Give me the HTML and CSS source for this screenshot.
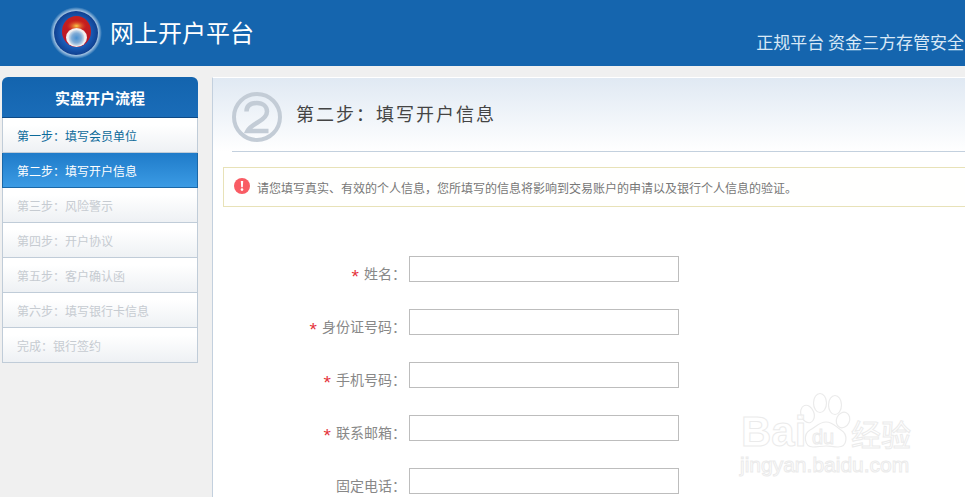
FILE: index.html
```html
<!DOCTYPE html>
<html lang="zh-CN">
<head>
<meta charset="utf-8">
<title>网上开户平台</title>
<link rel="stylesheet" href="styles.css">
</head>
<body>
<header class="top">
  <svg class="logo" width="54" height="54" viewBox="0 0 54 54">
    <defs>
      <radialGradient id="glow"><stop offset="0.82" stop-color="#c4d9ee"/><stop offset="1" stop-color="#1565ae"/></radialGradient>
      <radialGradient id="disc"><stop offset="0.6" stop-color="#1c62c0"/><stop offset="1" stop-color="#10408f"/></radialGradient>
      <linearGradient id="red" x1="0" y1="0" x2="0" y2="1"><stop offset="0" stop-color="#c8201c"/><stop offset="1" stop-color="#b8142a"/></linearGradient>
      <radialGradient id="sun"><stop offset="0" stop-color="#fbd34a"/><stop offset="1" stop-color="#e8401c" stop-opacity="0"/></radialGradient>
      <radialGradient id="core"><stop offset="0" stop-color="#4a90d0"/><stop offset="0.6" stop-color="#7fabd6"/><stop offset="1" stop-color="#d5e0ea"/></radialGradient>
    </defs>
    <circle cx="27" cy="27" r="26" fill="url(#glow)"/>
    <circle cx="27" cy="27" r="22" fill="url(#disc)"/>
    <ellipse cx="27.500" cy="25.500" rx="14.500" ry="15.500" fill="url(#red)"/>
    <ellipse cx="27.500" cy="20" rx="10" ry="6" fill="url(#sun)"/>
    <ellipse cx="27.500" cy="31.500" rx="10.500" ry="9.500" fill="#f4eeee"/>
    <ellipse cx="27.500" cy="32" rx="8" ry="8" fill="url(#core)"/>
  </svg>
  <div class="brand">网上开户平台</div>
  <div class="slogan">正规平台 资金三方存管安全</div>
</header>

<div class="page">
  <aside class="side">
    <h2 class="side-title">实盘开户流程</h2>
    <ul class="steps">
      <li class="step step-done">第一步：填写会员单位</li>
      <li class="step step-active">第二步：填写开户信息</li>
      <li class="step">第三步：风险警示</li>
      <li class="step">第四步：开户协议</li>
      <li class="step">第五步：客户确认函</li>
      <li class="step">第六步：填写银行卡信息</li>
      <li class="step">完成：银行签约</li>
    </ul>
  </aside>

  <main class="main">
    <div class="head">
      <svg class="num" width="50" height="50" viewBox="0 0 50 50">
        <circle cx="25" cy="25" r="23" fill="none" stroke="#c3ccd6" stroke-width="4"/>
        <path d="M14.500 19.500C14.500 13 19.500 11 25 11C31 11 35 14.500 35 19.500C35 24.500 31 27.500 25.500 30.500C20.500 33.500 17 36 15.500 39L36.500 39" fill="none" stroke="#c3ccd6" stroke-width="4.500"/>
      </svg>
      <h1 class="head-title">第二步：填写开户信息</h1>
    </div>

    <div class="notice">
      <svg class="notice-icon" width="16" height="16" viewBox="0 0 16 16">
        <circle cx="8" cy="8" r="8" fill="#f95c64"/>
        <path d="M6.800 3h2.400l-.4 6.200H7.200z" fill="#fff"/>
        <circle cx="8" cy="11.600" r="1.300" fill="#fff"/>
      </svg>
      <span>请您填写真实、有效的个人信息，您所填写的信息将影响到交易账户的申请以及银行个人信息的验证。</span>
    </div>

    <form class="form">
      <div class="row"><label class="label"><span class="req">*</span>姓名：</label><input class="field" type="text"></div>
      <div class="row"><label class="label"><span class="req">*</span>身份证号码：</label><input class="field" type="text"></div>
      <div class="row"><label class="label"><span class="req">*</span>手机号码：</label><input class="field" type="text"></div>
      <div class="row"><label class="label"><span class="req">*</span>联系邮箱：</label><input class="field" type="text"></div>
      <div class="row"><label class="label">固定电话：</label><input class="field" type="text"></div>
    </form>
  </main>
</div>

<div class="mark">
  <svg class="paw" width="52" height="58" viewBox="0 0 52 58">
    <g fill="none" stroke="#ebebeb" stroke-width="1.200">
      <ellipse cx="7.500" cy="22" rx="6.500" ry="9" transform="rotate(-20 7.500 22)"/>
      <ellipse cx="20" cy="11" rx="6.500" ry="9.500"/>
      <ellipse cx="35" cy="13" rx="6.500" ry="9.500"/>
      <ellipse cx="43" cy="28" rx="6.500" ry="8" transform="rotate(25 43 28)"/>
      <path d="M26 30C33 30 36 35 41 38C48 42 48 55 38 55C33 55 30 54 26 54C21 54 18 55 13 55C4 55 3 42 10 38C16 35 19 30 26 30Z"/>
    </g>
  </svg>
  <span class="mark-bai">Bai</span>
  <span class="mark-du">du</span>
  <span class="mark-cn">经验</span>
  <span class="mark-url">jingyan.baidu.com</span>
</div>
</body>
</html>
```
FILE: styles.css
```css
* { box-sizing: border-box; }
html, body { height: 100%; overflow: hidden; }
body {
  margin: 0;
  background: #f0f0f0;
  font-family: "Noto Sans CJK SC", "Liberation Sans", sans-serif;
  position: relative;
}
.top {
  height: 66px;
  background: #1565ae;
  display: flex;
  align-items: center;
  padding-left: 49px;
  position: relative;
  white-space: nowrap;
}
.logo { flex: none; }
.brand {
  color: #fff;
  font-size: 24px;
  line-height: 30px;
  margin-left: 7px;
  margin-top: -2px;
}
.slogan {
  margin-left: auto;
  margin-right: 1px;
  align-self: flex-end;
  color: #d8e8f6;
  font-size: 17px;
  line-height: 24px;
  padding-bottom: 12px;
}
.page {
  display: flex;
  align-items: flex-start;
  margin-top: 11px;
  padding-left: 2px;
}
.side {
  flex: none;
  width: 196px;
}
.side-title {
  margin: 0;
  height: 41px;
  border-radius: 6px 6px 0 0;
  background: linear-gradient(#1364ae, #1a6cb8);
  border-bottom: 1px solid #0e4a86;
  color: #fff;
  font-size: 15px;
  font-weight: bold;
  line-height: 41px;
  text-align: center;
}
.steps {
  list-style: none;
  margin: 0;
  padding: 0;
  border-left: 1px solid #c0ccd8;
  border-right: 1px solid #c0ccd8;
}
.step {
  height: 35px;
  padding-left: 14px;
  border-bottom: 1px solid #c0ccd8;
  background: linear-gradient(#fff 20%, #eef1f4);
  color: #c6cbd1;
  font-size: 12px;
  line-height: 35px;
}
.step-done { color: #0c6a9a; }
.step-active {
  margin: 0 -1px;
  padding-left: 14px;
  border: 1px solid #1a68a8;
  border-width: 0 1px 1px;
  background: linear-gradient(#1f7bc9, #3b9be4);
  color: #fff;
}
.main {
  flex: 1;
  min-width: 0;
  margin-left: 14px;
  height: 430px;
  background: #fff;
  border-left: 1px solid #c3d0de;
  border-top: 1px solid #fff;
  padding-left: 10px;
}
.head {
  position: relative;
  height: 74px;
  margin-left: -10px;
  padding: 4px 0 0 19px;
  display: flex;
  align-items: center;
  gap: 14px;
  background: linear-gradient(#e0e9f3, #fff);
}
.head::after {
  content: "";
  position: absolute;
  left: 19px;
  right: 0;
  bottom: 0;
  height: 1px;
  background: #c3d0de;
}
.num { flex: none; }
.head-title {
  margin: -8px 0 0;
  color: #444;
  font-size: 18px;
  font-weight: normal;
  letter-spacing: 2px;
  line-height: 26px;
}
.notice {
  display: flex;
  align-items: center;
  height: 40px;
  margin-top: 15px;
  margin-right: -1px;
  padding-left: 10px;
  gap: 7px;
  border: 1px solid #e8e2b8;
  background: #fffffe;
  color: #777;
  font-size: 12px;
  white-space: nowrap;
}
.notice-icon { flex: none; margin-top: -2px; }
.form { margin-top: 49px; }
.row {
  display: flex;
  height: 26px;
  margin-bottom: 27px;
}
.label {
  flex: none;
  width: 183px;
  margin-right: 3px;
  padding-top: 9px;
  text-align: right;
  color: #888;
  font-size: 14px;
  line-height: 16px;
  white-space: nowrap;
}
.req {
  color: #e5343c;
  font-family: "Liberation Sans", sans-serif;
  font-size: 19px;
  line-height: 0;
  vertical-align: -4px;
  margin-right: 5px;
}
.field {
  flex: none;
  width: 270px;
  height: 26px;
  border: 1px solid #bdbdbd;
  background: #fff;
  padding: 0 4px;
}
.mark {
  position: absolute;
  left: 738px;
  top: 390px;
  width: 180px;
  height: 90px;
  pointer-events: none;
}
.paw { position: absolute; left: 62px; top: 2px; }
.mark span {
  position: absolute;
  color: rgba(255,255,255,.7);
  -webkit-text-stroke: 1px #ebebeb;
  font-family: "Liberation Sans", sans-serif;
  white-space: nowrap;
}
.mark-bai { left: 3px; top: 20px; font-size: 42px; font-weight: bold; line-height: 44px; }
.mark-du { left: 74px; top: 35px; font-size: 20px; line-height: 24px; }
.mark .mark-cn { left: 113px; top: 26px; font-size: 30px; line-height: 34px; font-family: "Noto Sans CJK SC", sans-serif; }
.mark-url { left: 2px; top: 62px; font-size: 21px; line-height: 26px; }
```
